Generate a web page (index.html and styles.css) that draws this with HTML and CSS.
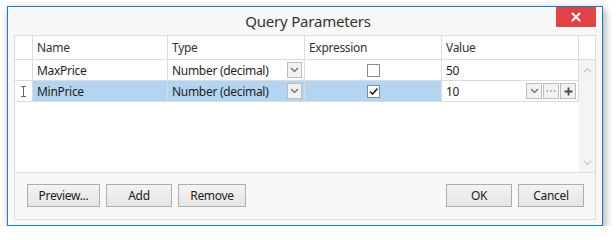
FILE: index.html
```html
<!DOCTYPE html>
<html lang="en">
<head>
  <meta charset="UTF-8">
  <title>Query Parameters</title>
  <link rel="stylesheet" href="styles.css">
</head>
<body>
  <div class="window">
    <div class="titlebar">
      <span></span>
      <div class="title">Query Parameters</div>
      <button class="close" type="button">
        <svg width="10" height="10" viewBox="0 0 10 10"><path d="M1 1L9 9M9 1L1 9" stroke="#fff" stroke-width="2"/></svg>
      </button>
    </div>

    <div class="content">
      <div class="grid">
        <!-- Header -->
        <div class="head">
          <div class="cell ind"></div>
          <div class="cell">Name</div>
          <div class="cell">Type</div>
          <div class="cell">Expression</div>
          <div class="cell">Value</div>
          <div class="cell corner"></div>
        </div>

        <div class="body">
          <div class="rows">
            <!-- MaxPrice -->
            <div class="row">
              <div class="cell ind"></div>
              <div class="cell">MaxPrice</div>
              <div class="cell combo">
                <span>Number (decimal)</span>
                <span class="btn"><svg width="9" height="6" viewBox="0 0 9 6"><path d="M1 1L4.5 4.5L8 1" fill="none" stroke="#666" stroke-width="1.2"/></svg></span>
              </div>
              <div class="cell check"><span class="box"></span></div>
              <div class="cell">50</div>
            </div>

            <!-- MinPrice (selected, editing) -->
            <div class="row selected">
              <div class="cell ind">
                <svg width="7" height="11" viewBox="0 0 7 11"><path d="M1 0.5H6M3.5 0.5V10.5M1 10.5H6" fill="none" stroke="#666" stroke-width="1"/></svg>
              </div>
              <div class="cell">MinPrice</div>
              <div class="cell combo">
                <span>Number (decimal)</span>
                <span class="btn"><svg width="9" height="6" viewBox="0 0 9 6"><path d="M1 1L4.5 4.5L8 1" fill="none" stroke="#666" stroke-width="1.2"/></svg></span>
              </div>
              <div class="cell check">
                <span class="box"><svg width="11" height="11" viewBox="0 0 11 11"><path d="M2 5.5L4.5 8L9.5 2.5" fill="none" stroke="#222" stroke-width="1.6"/></svg></span>
              </div>
              <div class="cell editor">
                <span>10</span>
                <span class="tools">
                  <span class="btn"><svg width="9" height="6" viewBox="0 0 9 6"><path d="M1 1L4.5 4.5L8 1" fill="none" stroke="#666" stroke-width="1.2"/></svg></span>
                  <span class="btn"><svg width="10" height="2" viewBox="0 0 10 2"><path d="M1 1H2M4.5 1H5.5M8 1H9" stroke="#666" stroke-width="1.5"/></svg></span>
                  <span class="btn"><svg width="9" height="9" viewBox="0 0 9 9"><path d="M4.5 0.5V8.5M0.5 4.5H8.5" stroke="#4a4a4a" stroke-width="1.8"/></svg></span>
                </span>
              </div>
            </div>
          </div>

          <div class="scroll">
            <svg width="9" height="6" viewBox="0 0 9 6"><path d="M1 5L4.5 1.5L8 5" fill="none" stroke="#c4c4c4" stroke-width="1.2"/></svg>
            <svg width="9" height="6" viewBox="0 0 9 6"><path d="M1 1L4.5 4.5L8 1" fill="none" stroke="#c4c4c4" stroke-width="1.2"/></svg>
          </div>
        </div>
      </div>

      <div class="buttons">
        <div class="group">
          <button type="button" class="w73">Preview...</button>
          <button type="button" class="w66">Add</button>
          <button type="button" class="w68">Remove</button>
        </div>
        <div class="group">
          <button type="button" class="w66">OK</button>
          <button type="button" class="w66">Cancel</button>
        </div>
      </div>
    </div>
  </div>
</body>
</html>
```

FILE: styles.css
```css
body {
  margin: 0;
  background: #fff;
  font-family: "Segoe UI", "Noto Sans", sans-serif;
  font-size: 12px;
  letter-spacing: -0.3px;
  color: #1e1e1e;
}
.window {
  box-sizing: border-box;
  margin: 6px 0 0 7px;
  width: 596px;
  height: 220px;
  border: 1px solid #1979ca;
  background: #f8f8f8;
  box-shadow: 2px 3px 8px rgba(0,0,0,0.35);
}
.titlebar {
  height: 28px;
  display: grid;
  grid-template-columns: 1fr auto 1fr;
  align-items: start;
}
.title {
  font-size: 15px;
  letter-spacing: -0.2px;
  color: #333;
  line-height: 28px;
  padding-left: 6px;
}
.close {
  justify-self: end;
  margin-right: 6px;
  width: 40px;
  height: 20px;
  border: none;
  padding: 0;
  background: #e04343;
  display: flex;
  align-items: center;
  justify-content: center;
}
.content {
  margin: 0 6px;
  border: 1px solid #dcdcdc;
  background: #f8f8f8;
}
.grid {
  height: 137px;
  box-sizing: border-box;
  border-bottom: 1px solid #dcdcdc;
  background: #fff;
  display: flex;
  flex-direction: column;
}
.head, .row {
  display: grid;
  grid-template-columns: 18px 135px 137px 137px 137px;
}
.head {
  grid-template-columns: 18px 135px 137px 137px 137px 16px;
  height: 24px;
}
.row {
  height: 21px;
}
.cell {
  box-sizing: border-box;
  border-right: 1px solid #dcdcdc;
  border-bottom: 1px solid #dcdcdc;
  padding: 0 4px;
  display: flex;
  align-items: center;
  white-space: nowrap;
}
.head .cell {
  color: #333;
}
.head .corner {
  border-right: none;
}
.ind {
  padding: 0;
  justify-content: center;
}
.body {
  flex: 1;
  display: flex;
}
.rows {
  flex: 1;
}
.scroll {
  width: 16px;
  background: #f4f4f4;
  display: flex;
  flex-direction: column;
  align-items: center;
  justify-content: space-between;
  padding: 7px 0 6px;
  box-sizing: border-box;
}
.selected .cell {
  background: #b3d5f1;
}
.selected .ind, .selected .editor {
  background: #fff;
}
.combo, .editor {
  justify-content: space-between;
  padding-right: 2px;
}
.btn {
  box-sizing: border-box;
  width: 15px;
  height: 16px;
  border: 1px solid #bdbdbd;
  background: #f2f2f2;
  display: flex;
  align-items: center;
  justify-content: center;
}
.tools {
  display: flex;
  gap: 1px;
}
.tools .btn {
  width: 16px;
}
.check {
  justify-content: center;
}
.box {
  box-sizing: border-box;
  width: 13px;
  height: 13px;
  border: 1px solid #8a8a8a;
  background: #fff;
  display: flex;
  align-items: center;
  justify-content: center;
}
.buttons {
  display: flex;
  justify-content: space-between;
  padding: 11px 11px 12px 12px;
}
.group {
  display: flex;
  gap: 6px;
}
button {
  font-family: inherit;
  font-size: 12px;
  letter-spacing: inherit;
  color: #1e1e1e;
}
.buttons button {
  height: 23px;
  border: 1px solid #adadad;
  background: linear-gradient(#f3f3f3, #e5e5e5);
  padding: 0;
}
.w73 { width: 73px; }
.w66 { width: 66px; }
.w68 { width: 68px; }
```
